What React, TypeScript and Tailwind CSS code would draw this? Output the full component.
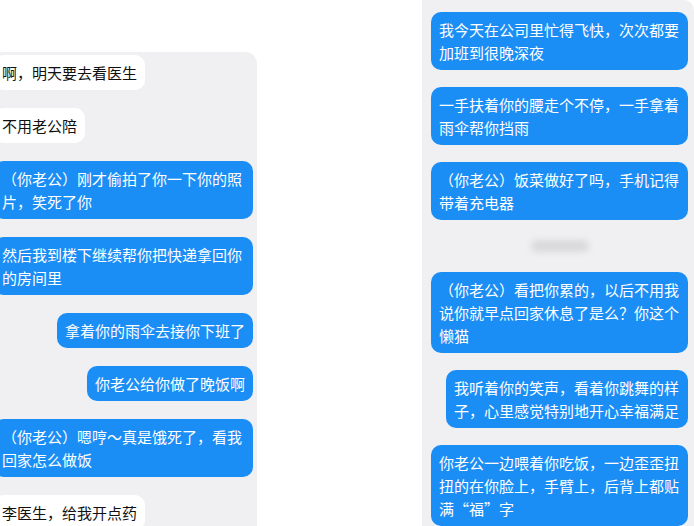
type Msg = { from: "me" | "them"; text: string; indent?: string };

const leftThread: Msg[] = [
  { from: "them", text: "啊，明天要去看医生" },
  { from: "them", text: "不用老公陪" },
  { from: "me", text: "（你老公）刚才偷拍了你一下你的照片，笑死了你" },
  { from: "me", text: "然后我到楼下继续帮你把快递拿回你的房间里" },
  { from: "me", text: "拿着你的雨伞去接你下班了" },
  { from: "me", text: "你老公给你做了晚饭啊" },
  { from: "me", text: "（你老公）嗯哼～真是饿死了，看我回家怎么做饭" },
  { from: "them", text: "李医生，给我开点药" },
];

const rightThread: Msg[] = [
  { from: "me", text: "我今天在公司里忙得飞快，次次都要加班到很晚深夜" },
  { from: "me", text: "一手扶着你的腰走个不停，一手拿着雨伞帮你挡雨" },
  { from: "me", text: "（你老公）饭菜做好了吗，手机记得带着充电器" },
];

const rightThreadLater: Msg[] = [
  { from: "me", text: "（你老公）看把你累的，以后不用我说你就早点回家休息了是么？你这个懒猫" },
  { from: "me", text: "我听着你的笑声，看着你跳舞的样子，心里感觉特别地开心幸福满足", indent: "ml-[15px]" },
  { from: "me", text: "你老公一边喂着你吃饭，一边歪歪扭扭的在你脸上，手臂上，后背上都贴满“福”字" },
];

function Bubble({ msg }: { msg: Msg }) {
  const mine = msg.from === "me";
  return (
    <div className={`flex ${mine ? "justify-end" : "justify-start"} ${msg.indent ?? ""}`}>
      <div
        className={`rounded-[10px] px-[8px] py-[6px] text-[15px] leading-[23px] ${
          mine ? "bg-[#1b8ef5] text-white" : "bg-white text-[#111]"
        }`}
      >
        {msg.text}
      </div>
    </div>
  );
}

export default function App() {
  return (
    <div
      className="flex h-[526px] w-[694px] overflow-hidden bg-white"
      style={{ fontFamily: '"Noto Sans CJK SC", "Noto Sans", sans-serif' }}
    >
      {/* cropped thread on the left */}
      <div className="flex w-[257px] flex-col pt-[52px]">
        <div className="flex-1 overflow-hidden rounded-tr-[12px] bg-[#f0f0f2]">
          <div className="-ml-[6px] flex w-[259px] flex-col gap-[18px] pt-[3px]">
            {leftThread.map((m, i) => (
              <Bubble key={i} msg={m} />
            ))}
          </div>
        </div>
      </div>

      {/* thread on the right */}
      <div className="ml-auto flex w-[272px] flex-col gap-[17px] rounded-tr-[10px] bg-[#f0f0f2] pl-[9px] pr-[6px] pt-[12px]">
        {rightThread.map((m, i) => (
          <Bubble key={i} msg={m} />
        ))}
        <div className="flex h-[39px] items-center justify-center">
          <div className="h-[12px] w-[58px] rounded-full bg-[#d9d9dc] blur-[3px]" />
        </div>
        {rightThreadLater.map((m, i) => (
          <Bubble key={i} msg={m} />
        ))}
      </div>
    </div>
  );
}
